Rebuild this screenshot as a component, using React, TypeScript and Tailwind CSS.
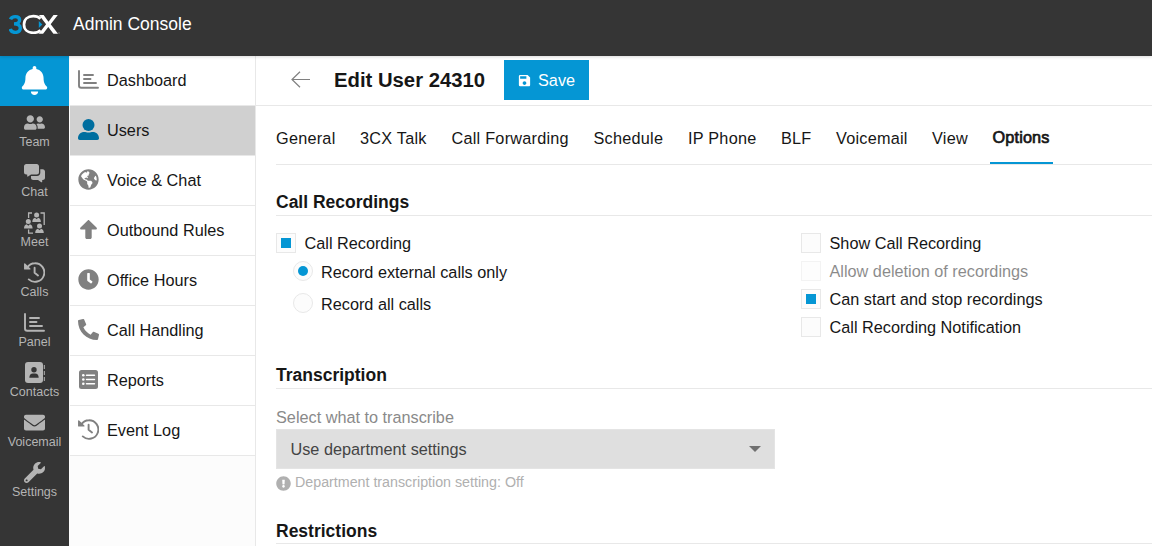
import React, { useState } from "react";
import {
  FaBell,
  FaUserFriends,
  FaEnvelope,
  FaWrench,
  FaGlobeAmericas,
  FaClock,
  FaPhoneAlt,
  FaExclamationCircle,
} from "react-icons/fa";
import { MdSave } from "react-icons/md";

type IconProps = { className?: string };

function Logo() {
  return (
    <svg viewBox="0 0 51 20" className="h-5 w-[51px]" fill="none">
      <path d="M1.500 5.400C2.200 3.500 3.900 2.600 6.200 2.600C9 2.600 10.600 3.900 10.600 6C10.600 8.400 8.700 9.900 5 9.900C9 9.900 11.300 11.400 11.300 14.100C11.300 16.900 9.300 18.400 6.200 18.400C3.500 18.400 1.700 17.200 1.200 15" stroke="#0596d4" strokeWidth="3.400" />
      <path d="M31.500 4.800C29.800 3 27.300 2.200 24.300 2.200C18.500 2.200 15 5.500 15 10.500C15 15.500 18.500 18.800 24.300 18.800C27.300 18.800 29.800 18 31.500 16.200" stroke="#fff" strokeWidth="2.700" />
      <path d="M30 1h4.600l4.900 6.700L44.500 1h4.300l-7.100 9.200L49 19.800h-4.600l-5.100-6.900-5.200 6.900h-4.300l7.300-9.500z" fill="#fff" />
      <path d="M29.800 7L33.300 10.500L29.800 14Z" fill="#0596d4" />
      <path d="M49.500 18.500h1v1h-1z" fill="#aaa" />
    </svg>
  );
}

function ChartIcon({ className }: IconProps) {
  return (
    <svg viewBox="0 0 21 19" className={className} fill="none" stroke="currentColor" strokeWidth="1.900" strokeLinecap="round">
      <path d="M1 1v14.500c0 1.400.8 2.300 2.200 2.300H20M6 5h9M6 9h6.500M6 13h12" />
    </svg>
  );
}

function ChatIcon({ className }: IconProps) {
  return (
    <svg viewBox="0 0 21 19" className={className} fill="currentColor">
      <path d="M2.300 0h10.400C14 0 15 1 15 2.300v6C15 9.600 14 10.600 12.700 10.600H7L4 12.600c-.4.300-.8 0-.8-.4v-1.600h-.9C1 10.600 0 9.600 0 8.300v-6C0 1 1 0 2.300 0z" />
      <path d="M16.300 5.200h2.400c1.300 0 2.300 1 2.300 2.300V13.700c0 1.300-1 2.300-2.300 2.300h-.5v1.800c0 .5-.5.700-.9.400L14 16H9.300C8 16 7 15 7 13.700V12h6c2 0 3.300-1.500 3.300-3.200z" />
    </svg>
  );
}

function HistoryIcon({ className }: IconProps) {
  return (
    <svg viewBox="0 0 21 21" className={className} fill="none" stroke="currentColor" strokeWidth="1.900" strokeLinecap="round" strokeLinejoin="round">
      <path d="M3.200 5.500C5 2.700 7.700 1.200 10.800 1.200a9.300 9.300 0 1 1-6 16.200M10.600 5.700v5l3.400 2.700" />
      <path d="M.7 2v4.900h5.200z" fill="currentColor" strokeWidth="1.300" />
    </svg>
  );
}

function UserIcon({ className }: IconProps) {
  return (
    <svg viewBox="0 0 21 21" className={className} fill="currentColor">
      <circle cx="10.500" cy="6" r="6" />
      <path d="M0 19.300C0 15.500 2.600 13 6.300 13c1.200 0 2.400.6 4.200.6s3-.6 4.200-.6c3.700 0 6.300 2.500 6.300 6.300 0 1-.8 1.700-1.700 1.700H1.700C.8 21 0 20.300 0 19.300z" />
    </svg>
  );
}

function UpIcon({ className }: IconProps) {
  return (
    <svg viewBox="0 0 17 19" className={className} fill="currentColor">
      <path d="M7.700.4.500 7.500c-.8.800-.3 2 .8 2h4v7.900c0 .9.700 1.500 1.500 1.500h3.400c.8 0 1.500-.6 1.500-1.500V9.500h4c1.100 0 1.600-1.200.8-2L9.300.4c-.5-.5-1.100-.5-1.600 0z" />
    </svg>
  );
}

function MeetIcon({ className }: IconProps) {
  return (
    <svg viewBox="0 0 21 22" className={className} fill="currentColor">
      <path d="M4.600 6V1H8M16.500 1h3.700v12M4.600 17.500v3.700H9" fill="none" stroke="currentColor" strokeWidth="1.300" />
      <circle cx="12.600" cy="3" r="2.500" />
      <path d="M8.300 10c0-2.700 1.200-4 2.700-4.300l1.600 1.500 1.600-1.500c1.500.3 2.700 1.600 2.700 4.300z" />
      <circle cx="4.300" cy="9.500" r="2.500" />
      <path d="M0 16.500c0-2.700 1.200-4 2.700-4.300l1.600 1.500 1.600-1.500c1.500.3 2.700 1.600 2.700 4.300z" />
      <circle cx="15.500" cy="14" r="2.500" />
      <path d="M11.200 21c0-2.700 1.200-4 2.700-4.300l1.600 1.500 1.600-1.500c1.500.3 2.700 1.600 2.700 4.300z" />
    </svg>
  );
}

function ContactsIcon({ className }: IconProps) {
  return (
    <svg viewBox="0 0 21 21" className={className}>
      <rect x="1" width="18" height="21" rx="3" fill="currentColor" />
      <circle cx="10" cy="7.700" r="2.700" fill="#353535" />
      <path d="M5.300 15.800c0-2.800 1.500-4.300 3.500-4.300h2.400c2 0 3.500 1.500 3.500 4.300z" fill="#353535" />
      <path d="M20.300 3v4M20.300 9v4M20.300 15v4" stroke="currentColor" strokeWidth="1" />
    </svg>
  );
}

function ListIcon({ className }: IconProps) {
  return (
    <svg viewBox="0 0 19 19" className={className}>
      <rect width="19" height="19" rx="2.500" fill="currentColor" />
      <path d="M7.500 5.200h8M7.500 9.500h8M7.500 13.800h8" stroke="#fff" strokeWidth="1.400" strokeLinecap="round" />
      <g fill="#fff">
        <circle cx="4.300" cy="5.200" r="1.300" />
        <circle cx="4.300" cy="9.500" r="1.300" />
        <circle cx="4.300" cy="13.800" r="1.300" />
      </g>
    </svg>
  );
}

const railItems = [
  { label: "Team", icon: <FaUserFriends className="size-[21px]" /> },
  { label: "Chat", icon: <ChatIcon className="mt-0.5 h-[19px] w-[21px]" /> },
  { label: "Meet", icon: <MeetIcon className="h-[22px] w-[21px]" /> },
  { label: "Calls", icon: <HistoryIcon className="size-[21px]" /> },
  { label: "Panel", icon: <ChartIcon className="h-[19px] w-[21px]" /> },
  { label: "Contacts", icon: <ContactsIcon className="size-[21px]" /> },
  { label: "Voicemail", icon: <FaEnvelope className="size-[21px]" /> },
  { label: "Settings", icon: <FaWrench className="size-[21px]" /> },
];

const menuItems = [
  { label: "Dashboard", icon: <ChartIcon className="h-[19px] w-[21px]" /> },
  { label: "Users", icon: <UserIcon className="size-[21px]" />, active: true },
  { label: "Voice & Chat", icon: <FaGlobeAmericas className="size-[21px]" /> },
  { label: "Outbound Rules", icon: <UpIcon className="h-[19px] w-[17px]" /> },
  { label: "Office Hours", icon: <FaClock className="size-[21px]" /> },
  { label: "Call Handling", icon: <FaPhoneAlt className="size-[21px]" /> },
  { label: "Reports", icon: <ListIcon className="size-[19px]" /> },
  { label: "Event Log", icon: <HistoryIcon className="size-[21px]" /> },
];

const tabs = [
  { label: "General", width: "w-[59.500px]" },
  { label: "3CX Talk", width: "w-[67px]" },
  { label: "Call Forwarding", width: "w-[117.500px]" },
  { label: "Schedule", width: "w-[70px]" },
  { label: "IP Phone", width: "w-[68.500px]" },
  { label: "BLF", width: "w-[30.500px]" },
  { label: "Voicemail", width: "w-[71.500px]" },
  { label: "View", width: "w-[36px]" },
];

function SectionTitle({ children }: { children: React.ReactNode }) {
  return <h2 className="h-[28px] border-b border-[#e8e8e8] text-[17.500px] leading-[29px] font-bold">{children}</h2>;
}

function Checkbox({ label, checked, disabled, onChange }: { label: string; checked: boolean; disabled?: boolean; onChange?: () => void }) {
  return (
    <button onClick={onChange} disabled={disabled} className={`flex h-5 items-center gap-[8.500px] ${disabled ? "opacity-50" : ""}`}>
      <span className="flex size-5 items-center justify-center border border-[#e8e8e8] bg-[#fcfcfc]">
        {checked && <span className="size-2.5 bg-[#0596d4]" />}
      </span>
      <span>{label}</span>
    </button>
  );
}

function Radio({ label, checked, onChange }: { label: string; checked: boolean; onChange: () => void }) {
  return (
    <button onClick={onChange} className="flex h-5 items-center gap-2">
      <span className="flex size-5 items-center justify-center rounded-full border border-[#e8e8e8] bg-[#fcfcfc]">
        {checked && <span className="size-2.5 rounded-full bg-[#0596d4]" />}
      </span>
      <span className="pt-px">{label}</span>
    </button>
  );
}

export default function App() {
  const [recording, setRecording] = useState(true);
  const [mode, setMode] = useState("external");
  const [show, setShow] = useState(false);
  const [canStop, setCanStop] = useState(true);
  const [notify, setNotify] = useState(false);

  return (
    <div className="flex h-[546px] w-[1152px] flex-col overflow-hidden bg-white font-['Liberation_Sans',Arial,sans-serif] text-[16.250px] leading-6 text-[#161616]">
      <header className="z-10 flex h-14 shrink-0 bg-[#353535] pt-[14px] pl-[9px] shadow-[0_1px_3px_rgba(0,0,0,0.15)]">
        <Logo />
        <span className="ml-[13px] text-[17.500px] leading-5 text-white">Admin Console</span>
      </header>

      <div className="flex min-h-0 flex-1">
        {/* Main rail */}
        <nav className="w-[69px] shrink-0 bg-[#353535] text-[#b4b4b4]">
          <div className="flex h-[50px] items-center justify-center bg-[#0596d4] pb-0.5 text-white">
            <FaBell className="size-[29px]" />
          </div>
          {railItems.map((item) => (
            <a key={item.label} className="flex h-[50px] flex-col items-center pt-[5px]">
              <span className="flex h-[23px] items-center">{item.icon}</span>
              <span className="text-[12.500px] leading-4">{item.label}</span>
            </a>
          ))}
        </nav>

        {/* Admin menu */}
        <nav className="w-[187px] shrink-0 border-r border-[#e8e8e8] bg-[#fcfcfc] pl-px">
          {menuItems.map((item) => (
            <a
              key={item.label}
              className={`flex h-[50px] items-center border-b border-[#e8e8e8] pl-2 ${item.active ? "bg-[#d0d0d0]" : "bg-white"}`}
            >
              <span className={`flex w-[21px] justify-center pb-0.5 ${item.active ? "text-[#006e9f]" : "text-[#808080]"}`}>{item.icon}</span>
              <span className="ml-2 pb-0.5">{item.label}</span>
            </a>
          ))}
        </nav>

        <main className="flex min-w-0 flex-1 flex-col">
          <div className="flex h-[50px] shrink-0 items-center border-b border-[#e8e8e8] pb-px pl-[35px]">
            <svg viewBox="0 0 19 17" className="mb-px h-[17px] w-[19px] text-[#808080]" fill="none" stroke="currentColor" strokeWidth="1.200">
              <path d="M19 8.500H1M9 .7L1 8.500l8 7.800" />
            </svg>
            <h1 className="ml-6 w-[170px] text-[20.300px] font-bold">Edit User 24310</h1>
            <button className="flex h-10 w-[85px] items-center bg-[#0596d4] pl-[13px] text-white">
              <MdSave className="size-[15px]" />
              <span className="ml-1.5 pb-px">Save</span>
            </button>
          </div>

          <div className="pl-5">
            <div className="flex h-[59px] gap-[24.500px] border-b border-[#e8e8e8] pt-[19px] leading-[26px]">
              {tabs.map((tab) => (
                <a key={tab.label} className={`shrink-0 tracking-[0.240px] whitespace-nowrap ${tab.width}`}>
                  {tab.label}
                </a>
              ))}
              <a className="-ml-[2.500px] h-[39px] w-[63px] border-b-2 border-[#0596d4] pl-[2.500px] leading-6 tracking-[0.150px] [-webkit-text-stroke:0.700px_currentColor]">
                Options
              </a>
            </div>

            <section className="pt-[23px]">
              <SectionTitle>Call Recordings</SectionTitle>
              <div className="flex h-[145px] pt-[17px]">
                <div className="w-[525px]">
                  <Checkbox label="Call Recording" checked={recording} onChange={() => setRecording(!recording)} />
                  <div className="mt-2 flex flex-col gap-3 pl-[17px]">
                    <Radio label="Record external calls only" checked={mode === "external"} onChange={() => setMode("external")} />
                    <Radio label="Record all calls" checked={mode === "all"} onChange={() => setMode("all")} />
                  </div>
                </div>
                <div className="flex flex-col gap-2">
                  <Checkbox label="Show Call Recording" checked={show} onChange={() => setShow(!show)} />
                  <Checkbox label="Allow deletion of recordings" checked={false} disabled />
                  <Checkbox label="Can start and stop recordings" checked={canStop} onChange={() => setCanStop(!canStop)} />
                  <Checkbox label="Call Recording Notification" checked={notify} onChange={() => setNotify(!notify)} />
                </div>
              </div>
            </section>

            <section>
              <SectionTitle>Transcription</SectionTitle>
              <label className="block pt-[17px] pb-px leading-[22px] text-[#8a8a8a]">Select what to transcribe</label>
              <div className="flex h-10 w-[499px] items-center justify-between border border-[#e4e4e4] bg-[#dfdfdf] pr-[13px] pl-[13.500px] text-[#444]">
                <span className="pb-px">Use department settings</span>
                <svg viewBox="0 0 12 6" className="h-1.5 w-3 fill-[#707070]">
                  <path d="M0 0h12L6 6z" />
                </svg>
              </div>
              <p className="flex h-[27px] items-center gap-1 text-[14.250px] text-[#b0b0b0]">
                <FaExclamationCircle className="mt-0.5 size-[15px]" />
                <span className="pb-0.5">Department transcription setting: Off</span>
              </p>
            </section>

            <section className="pt-5">
              <h2 className="h-[28px] border-b border-[#e8e8e8] text-[17.500px] leading-[31px] font-bold">Restrictions</h2>
            </section>
          </div>
        </main>
      </div>
    </div>
  );
}
